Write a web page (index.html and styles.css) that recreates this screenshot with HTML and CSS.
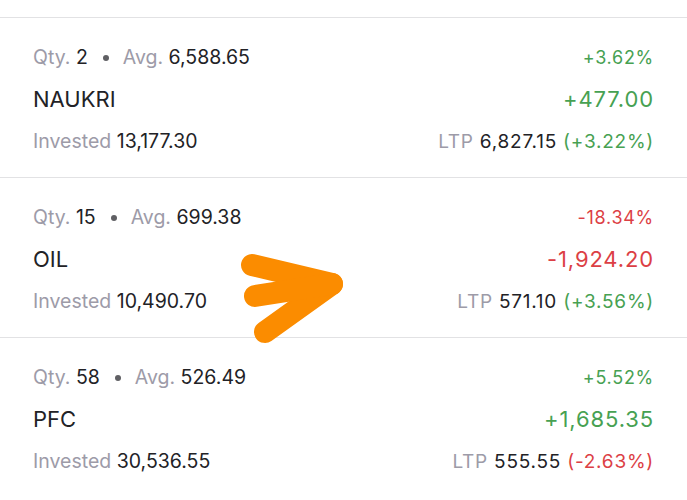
FILE: index.html
```html
<!DOCTYPE html>
<html lang="en">
<head>
  <meta charset="UTF-8">
  <title>Holdings</title>
  <meta name="viewport" content="width=device-width, initial-scale=1.0">
  <link rel="stylesheet" href="styles.css">
</head>
<body>
  <div class="list">
    <div class="holding">
      <div class="line">
        <div><span class="muted">Qty.</span> 2<span class="dot"></span><span class="muted">Avg.</span> 6,588.65</div>
        <div class="num pct up">+3.62%</div>
      </div>
      <div class="line">
        <div class="name">NAUKRI</div>
        <div class="num big up">+477.00</div>
      </div>
      <div class="line">
        <div><span class="muted">Invested</span> 13,177.30</div>
        <div class="num"><span class="muted">LTP</span> 6,827.15 <span class="up">(+3.22%)</span></div>
      </div>
    </div>

    <div class="holding">
      <div class="line">
        <div><span class="muted">Qty.</span> 15<span class="dot"></span><span class="muted">Avg.</span> 699.38</div>
        <div class="num pct down">-18.34%</div>
      </div>
      <div class="line">
        <div class="name">OIL</div>
        <div class="num big down">-1,924.20</div>
      </div>
      <div class="line">
        <div><span class="muted">Invested</span> 10,490.70</div>
        <div class="num"><span class="muted">LTP</span> 571.10 <span class="up">(+3.56%)</span></div>
      </div>
    </div>

    <div class="holding">
      <div class="line">
        <div><span class="muted">Qty.</span> 58<span class="dot"></span><span class="muted">Avg.</span> 526.49</div>
        <div class="num pct up">+5.52%</div>
      </div>
      <div class="line">
        <div class="name">PFC</div>
        <div class="num big up">+1,685.35</div>
      </div>
      <div class="line">
        <div><span class="muted">Invested</span> 30,536.55</div>
        <div class="num"><span class="muted">LTP</span> 555.55 <span class="down">(-2.63%)</span></div>
      </div>
    </div>
  </div>

  <!-- pointer drawn over the list -->
  <svg class="pointer" width="120" height="100" viewBox="0 0 120 100">
    <g stroke="#fb8c00" stroke-width="22" stroke-linecap="round" stroke-linejoin="round" fill="none">
      <path d="M12 15 L92 34 L25 82"/>
      <path d="M15 46 L92 34"/>
    </g>
  </svg>
</body>
</html>
```

FILE: styles.css
```css
html, body {
  margin: 0;
  background: #fff;
  color: #222226;
  font-family: Inter, 'Noto Sans', Arial, sans-serif;
  overflow: hidden;
}

.list {
  padding-top: 17px;
}

.holding {
  height: 160px;
  box-sizing: border-box;
  border-top: 1px solid #e2e2e4;
  padding: 18px 33px 0 33px;
}

.line {
  display: flex;
  justify-content: space-between;
  align-items: center;
  height: 42px;
  font-size: 19.5px;
}

.muted {
  color: #9d9ba8;
}

.dot {
  display: inline-block;
  width: 6px;
  height: 6px;
  border-radius: 50%;
  background: #606064;
  vertical-align: middle;
  margin: 0 14px 0 15px;
  position: relative;
  top: -1px;
}

.name {
  font-size: 22px;
}

.num {
  font-size: 19px;
  letter-spacing: 0.04em;
}

.pct {
  font-size: 18px;
}

.big {
  font-size: 22px;
}

.up { color: #47a152; }
.down { color: #dc3f45; }

.pointer {
  position: absolute;
  left: 240px;
  top: 250px;
}
```
